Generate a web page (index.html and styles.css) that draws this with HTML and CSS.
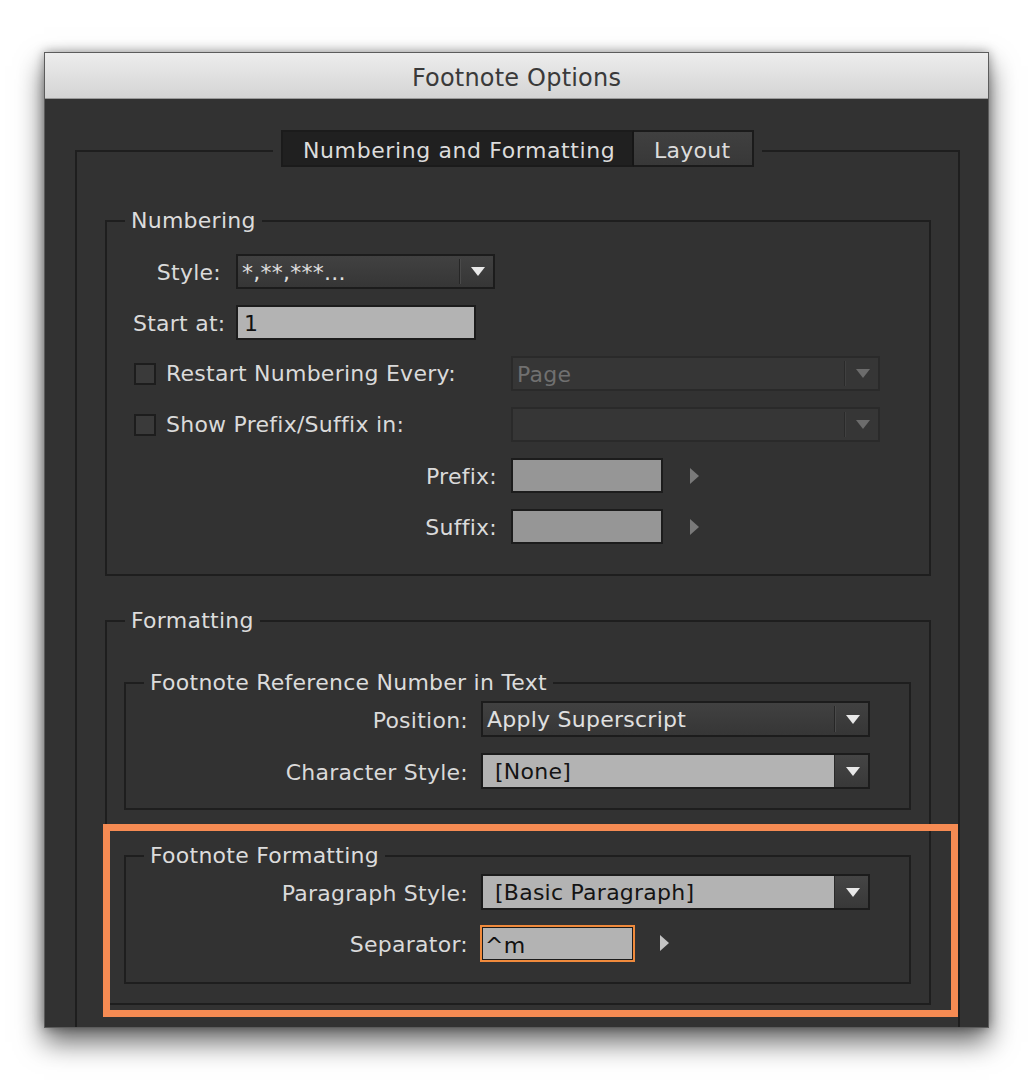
FILE: index.html
```html
<!DOCTYPE html>
<html>
<head>
<meta charset="utf-8">
<title>Footnote Options</title>
<link rel="stylesheet" href="styles.css">
</head>
<body>
<div class="dialog">
  <div class="titlebar">Footnote Options</div>
  <div class="content">
    <div class="panel">
      <div class="tabs">
        <div class="tabbar">
          <div class="tab active">Numbering and Formatting</div>
          <div class="tab">Layout</div>
        </div>
      </div>

      <fieldset class="group numbering">
        <legend>Numbering</legend>
        <div class="rows num-rows">
          <div class="row">
            <span class="lbl lbl-short">Style:</span>
            <div class="dd dark w-style"><span class="val">*,**,***...</span><span class="btn"><i class="tri"></i></span></div>
          </div>
          <div class="row">
            <span class="lbl lbl-short">Start at:</span>
            <div class="field light w-start">1</div>
          </div>
          <div class="row">
            <span class="chk-lbl"><span class="chk"></span>Restart Numbering Every:</span>
            <div class="dd disabled w-wide"><span class="val">Page</span><span class="btn"><i class="tri"></i></span></div>
          </div>
          <div class="row">
            <span class="chk-lbl"><span class="chk"></span>Show Prefix/Suffix in:</span>
            <div class="dd disabled w-wide"><span class="val"></span><span class="btn"><i class="tri"></i></span></div>
          </div>
          <div class="row">
            <span class="lbl lbl-long">Prefix:</span>
            <div class="field dim w-fix"></div>
            <i class="rtri dimtri"></i>
          </div>
          <div class="row">
            <span class="lbl lbl-long">Suffix:</span>
            <div class="field dim w-fix"></div>
            <i class="rtri dimtri"></i>
          </div>
        </div>
      </fieldset>

      <fieldset class="group formatting">
        <legend>Formatting</legend>
        <fieldset class="group sub ref">
          <legend>Footnote Reference Number in Text</legend>
          <div class="rows sub-rows">
            <div class="row">
              <span class="lbl lbl-fmt">Position:</span>
              <div class="dd dark w-fmt"><span class="val">Apply Superscript</span><span class="btn"><i class="tri"></i></span></div>
            </div>
            <div class="row">
              <span class="lbl lbl-fmt">Character Style:</span>
              <div class="dd lightdd w-fmt"><span class="val">[None]</span><span class="btn"><i class="tri"></i></span></div>
            </div>
          </div>
        </fieldset>
        <fieldset class="group sub fmt">
          <legend>Footnote Formatting</legend>
          <div class="rows sub-rows fmt-rows">
            <div class="row">
              <span class="lbl lbl-fmt">Paragraph Style:</span>
              <div class="dd lightdd w-fmt"><span class="val">[Basic Paragraph]</span><span class="btn"><i class="tri"></i></span></div>
            </div>
            <div class="row">
              <span class="lbl lbl-fmt">Separator:</span>
              <div class="field light focus w-sep">^m</div>
              <i class="rtri brighttri"></i>
            </div>
          </div>
        </fieldset>
      </fieldset>
    </div>
    <div class="highlight"></div>
  </div>
</div>
</body>
</html>
```

FILE: styles.css
```css
html, body {
  margin: 0;
  padding: 0;
  background: #ffffff;
}

body {
  min-height: 1080px;
  font-family: "DejaVu Sans", "Liberation Sans", sans-serif;
  font-size: 22px;
  letter-spacing: 0.25px;
  color: #dadada;
}

.dialog {
  margin: 52px 0 0 44px;
  width: 945px;
  border: 1px solid #5c5c5c;
  box-sizing: border-box;
  box-shadow: 0 14px 26px rgba(0, 0, 0, 0.6), 0 0 10px rgba(0, 0, 0, 0.35);
  background: #323232;
}

.titlebar {
  height: 45px;
  line-height: 50px;
  text-align: center;
  font-size: 24px;
  letter-spacing: 0.2px;
  color: #3a3a3a;
  background: linear-gradient(#ededed, #d4d4d4);
  border-bottom: 1px solid #9a9a9a;
}

.content {
  position: relative;
  height: 928px;
  overflow: hidden;
  background: #323232;
}

.panel {
  margin: 51px 28px 0 30px;
  height: 1000px;
  border: 2px solid #1e1e1e;
  box-sizing: border-box;
}

.tabs {
  display: flex;
  justify-content: center;
  margin-top: -22px;
}

.tabbar {
  display: flex;
  background: #323232;
  padding: 0 8px;
}

.tab {
  height: 37px;
  box-sizing: border-box;
  line-height: 37px;
  padding: 0 20px;
  border: 2px solid #1b1b1b;
  background: linear-gradient(#404040, #383838);
  color: #dcdcdc;
  white-space: nowrap;
}

.tab.active {
  width: 353px;
  background: #202020;
  border-right: 2px solid #161616;
  letter-spacing: 0.6px;
}

.tab + .tab {
  border-left: none;
  width: 120px;
}

.group {
  border: 2px solid #1e1e1e;
  padding: 0;
  min-inline-size: 0;
}

.group > legend {
  margin-left: 18px;
  padding: 0 6px;
  line-height: 28px;
  color: #dcdcdc;
}

.numbering {
  margin: 40px 27px 0 28px;
}

.rows {
  display: flex;
  flex-direction: column;
}

.num-rows {
  gap: 16px;
  padding: 19px 0 30px 26px;
}

.row {
  display: flex;
  align-items: center;
  height: 35px;
}

.lbl {
  text-align: right;
  white-space: nowrap;
  flex: none;
  padding-top: 2px;
}

.lbl-short {
  width: 88px;
  margin-right: 15px;
}

.lbl-long {
  width: 364px;
  margin-right: 14px;
}

.chk-lbl {
  width: 378px;
  flex: none;
  display: flex;
  align-items: center;
  white-space: nowrap;
}

.chk {
  width: 22px;
  height: 22px;
  box-sizing: border-box;
  border: 2px solid #1d1d1d;
  background: #3a3a3a;
  margin: 0 10px 0 1px;
  flex: none;
}

/* dropdowns */
.dd {
  display: flex;
  height: 35px;
  box-sizing: border-box;
  border: 2px solid #1c1c1c;
  flex: none;
}

.dd .val {
  flex: 1;
  line-height: 33px;
  padding-left: 4px;
  white-space: nowrap;
  overflow: hidden;
}

.dd .btn {
  width: 34px;
  flex: none;
  display: flex;
  align-items: center;
  justify-content: center;
  box-shadow: inset 1px 0 0 #262626, inset 2px 0 0 #4a4a4a;
}

.tri {
  width: 0;
  height: 0;
  border-left: 7px solid transparent;
  border-right: 7px solid transparent;
  border-top: 9px solid #e8e8e8;
  margin-left: 4px;
}

.dd.dark {
  background: linear-gradient(#414141, #363636);
  color: #e0e0e0;
}

.dd.dark .btn {
  margin: 3px 0;
}

.dd.disabled {
  background: #363636;
  border-color: #2a2a2a;
  color: #707070;
}

.dd.disabled .btn {
  margin: 3px 0;
  box-shadow: inset 1px 0 0 #2a2a2a, inset 2px 0 0 #404040;
}

.dd.disabled .tri {
  border-top-color: #6c6c6c;
}

.dd.lightdd {
  background: linear-gradient(#454545, #383838);
}

.dd.lightdd .val {
  background: #b3b3b3;
  color: #141414;
  padding-left: 12px;
}

.dd.lightdd .btn {
  box-shadow: inset 1px 0 0 #2a2a2a;
}

.w-style { width: 259px; }
.w-wide { width: 369px; }
.w-fmt { width: 389px; height: 36px; }

/* text fields */
.field {
  height: 35px;
  box-sizing: border-box;
  border: 2px solid #1c1c1c;
  line-height: 33px;
  padding-left: 6px;
  color: #111;
  flex: none;
}

.field.light { background: #b3b3b3; }
.field.dim { background: #969696; }

.w-start { width: 240px; }
.w-fix { width: 152px; }

.field.focus {
  width: 155px;
  height: 37px;
  margin-left: -1px;
  border: 2px solid #f08a3c;
  box-shadow: inset 0 0 0 1px #1c1c1c;
  line-height: 38px;
  padding-left: 3px;
}

.rtri {
  width: 0;
  height: 0;
  border-top: 8px solid transparent;
  border-bottom: 8px solid transparent;
  border-left: 9px solid #7a7a7a;
  flex: none;
}

.dimtri { margin-left: 27px; }
.brighttri { border-left-color: #c4c4c4; margin-left: 25px; }

/* formatting */
.formatting {
  margin: 31px 27px 0 28px;
  padding: 0 0 19px 0;
}

.sub {
  margin: 34px 18px 0 17px;
}

.sub.fmt {
  margin-top: 32px;
}

.sub-rows {
  gap: 16px;
  padding: 4px 0 19px 0;
}

.sub-rows .row { height: 36px; }

.fmt-rows {
  gap: 15px;
  padding-bottom: 21px;
}

.lbl-fmt {
  width: 342px;
  margin-right: 13px;
}

.highlight {
  position: absolute;
  left: 58px;
  top: 725px;
  width: 855px;
  height: 193px;
  box-sizing: border-box;
  border: 7px solid #f68b53;
  pointer-events: none;
}
```
